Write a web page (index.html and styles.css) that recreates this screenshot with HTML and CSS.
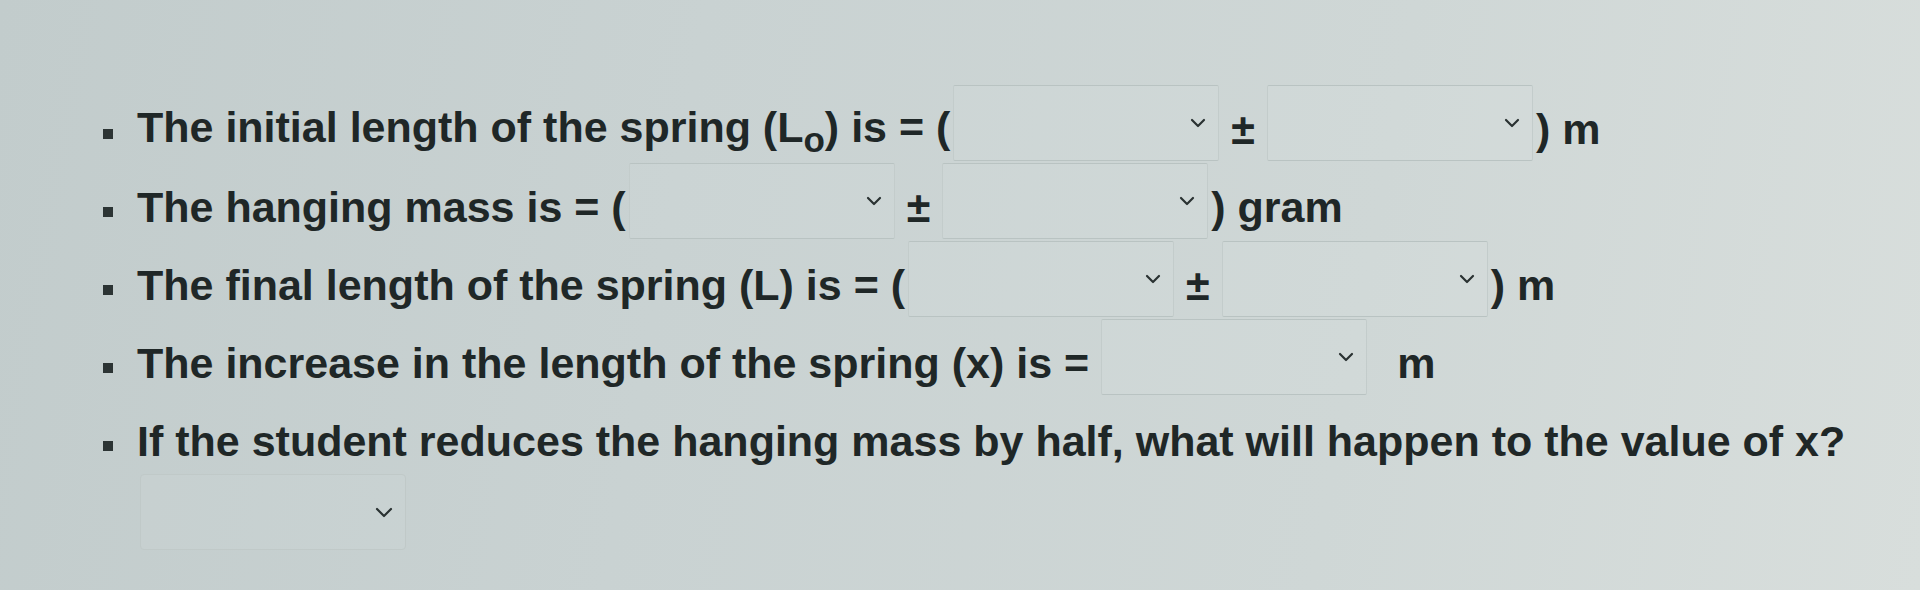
FILE: index.html
```html
<!DOCTYPE html>
<html lang="en">
<head>
    <meta charset="UTF-8">
    <meta name="viewport" content="width=device-width, initial-scale=1.0">
    <title>Spring Experiment</title>
    <link rel="stylesheet" href="styles.css">
</head>
<body>
    <ul class="questions">
        <!-- initial length -->
        <li class="q">
            <span class="bullet"></span>
            <span class="txt">The initial length of the spring (L<span class="sub">o</span>) is = (</span>
            <div class="dropdown"><svg class="chev" width="16" height="10" viewBox="0 0 16 10"><polyline points="2,2 8,8 14,2"/></svg></div>
            <span class="txt pm">±</span>
            <div class="dropdown"><svg class="chev" width="16" height="10" viewBox="0 0 16 10"><polyline points="2,2 8,8 14,2"/></svg></div>
            <span class="txt">) m</span>
        </li>

        <!-- hanging mass -->
        <li class="q">
            <span class="bullet"></span>
            <span class="txt">The hanging mass is = (</span>
            <div class="dropdown"><svg class="chev" width="16" height="10" viewBox="0 0 16 10"><polyline points="2,2 8,8 14,2"/></svg></div>
            <span class="txt pm">±</span>
            <div class="dropdown"><svg class="chev" width="16" height="10" viewBox="0 0 16 10"><polyline points="2,2 8,8 14,2"/></svg></div>
            <span class="txt">) gram</span>
        </li>

        <!-- final length -->
        <li class="q">
            <span class="bullet"></span>
            <span class="txt">The final length of the spring (L) is = (</span>
            <div class="dropdown"><svg class="chev" width="16" height="10" viewBox="0 0 16 10"><polyline points="2,2 8,8 14,2"/></svg></div>
            <span class="txt pm">±</span>
            <div class="dropdown"><svg class="chev" width="16" height="10" viewBox="0 0 16 10"><polyline points="2,2 8,8 14,2"/></svg></div>
            <span class="txt">) m</span>
        </li>

        <!-- increase in length -->
        <li class="q">
            <span class="bullet"></span>
            <span class="txt">The increase in the length of the spring (x) is =</span>
            <div class="dropdown spaced"><svg class="chev" width="16" height="10" viewBox="0 0 16 10"><polyline points="2,2 8,8 14,2"/></svg></div>
            <span class="txt unit">m</span>
        </li>

        <!-- half the mass -->
        <li class="q">
            <span class="bullet"></span>
            <span class="txt">If the student reduces the hanging mass by half, what will happen to the value of x?</span>
        </li>
        <li class="answer">
            <div class="dropdown wide"><svg class="chev" width="18" height="11" viewBox="0 0 18 11"><polyline points="2,2 9,9 16,2"/></svg></div>
        </li>
    </ul>
</body>
</html>
```

FILE: styles.css
```css
body {
    margin: 0;
    height: 590px;
    overflow: hidden;
    font-family: "Liberation Sans", Arial, sans-serif;
    color: #1f2727;
    background: linear-gradient(100deg, #c2cccc 0%, #c9d2d2 35%, #cfd7d6 70%, #d8dedc 100%);
}
.questions {
    list-style: none;
    margin: 0;
    padding: 84px 0 0 103px;
}
.q {
    display: flex;
    align-items: center;
    height: 78px;
    white-space: nowrap;
}
.bullet {
    width: 10px;
    height: 10px;
    margin-top: 22px;
    margin-right: 24px;
    background-color: #2c3434;
    flex-shrink: 0;
}
.txt {
    font-size: 43px;
    font-weight: bold;
    padding-top: 14px;
    line-height: 1.15;
}
.sub {
    font-size: 35px;
    vertical-align: -10px;
    line-height: 1;
}
.pm {
    margin: 0 9px;
}
.unit {
    margin-left: 27px;
}
.dropdown {
    box-sizing: border-box;
    width: 266px;
    height: 76px;
    margin: 1px 3px;
    display: flex;
    align-items: center;
    justify-content: flex-end;
    padding-right: 12px;
    border: 1px solid #b9c3c2;
    border-left-color: #c3cccb;
    border-right-color: #c3cccb;
    border-radius: 2px;
    background-color: rgba(255, 255, 255, 0.05);
    flex-shrink: 0;
}
.dropdown.spaced {
    margin-left: 12px;
}
.dropdown.wide {
    margin: 0 0 0 37px;
    padding-right: 12px;
    border-radius: 4px;
    border-color: #c0c9c8;
}
.chev polyline {
    fill: none;
    stroke: #2a3232;
    stroke-width: 2.2;
    stroke-linecap: round;
    stroke-linejoin: round;
}
```
